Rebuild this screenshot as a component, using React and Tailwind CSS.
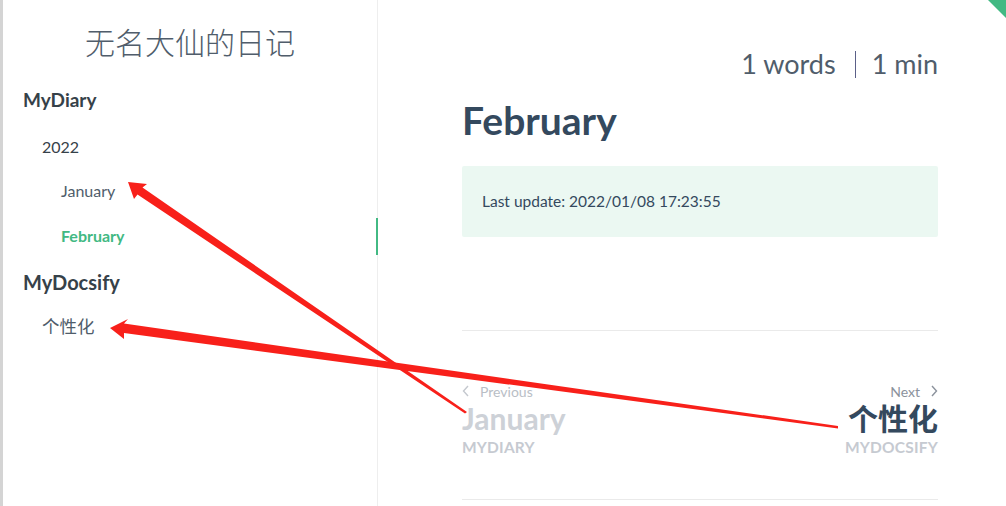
import React from "react";

const font = { fontFamily: 'Lato, "Noto Sans CJK SC", sans-serif' };

function Chevron({ dir = "left", className = "" }) {
  return (
    <svg width="8" height="12" viewBox="0 0 8 12" className={className} fill="none" stroke="currentColor" strokeWidth="1.4">
      {dir === "left" ? <path d="M6 1 L1.5 6 L6 11" /> : <path d="M2 1 L6.5 6 L2 11" />}
    </svg>
  );
}

export default function App() {
  return (
    <div className="relative w-[1006px] h-[506px] overflow-hidden bg-white flex" style={font}>
      {/* sidebar */}
      <aside className="w-[378px] h-full shrink-0 border-l-[3px] border-l-[#d4d4d4] border-r border-r-[#eeeeee] relative flex flex-col">
        <div className="mt-[20px] h-[44px] leading-[44px] text-center text-[30px] font-light text-[#505d6b]">无名大仙的日记</div>
        <div className="mt-[16px] h-[40px] flex items-center pl-[20px] text-[19px] font-bold text-[#364149]">MyDiary</div>
        <div className="mt-[7px] h-[40px] flex items-center pl-[39px] text-[16px] text-[#364149]">2022</div>
        <div className="mt-[4px] h-[40px] flex items-center pl-[58px] text-[16px] text-[#505d6b]">January</div>
        <div className="mt-[5px] h-[40px] flex items-center pl-[58px] text-[16px] font-bold text-[#42b983]">February</div>
        <div className="mt-[6px] h-[40px] flex items-center pl-[20px] text-[20px] font-bold text-[#364149]">MyDocsify</div>
        <div className="mt-[5px] h-[40px] flex items-center pl-[39px] text-[17.5px] text-[#505d6b]">个性化</div>
        <div className="absolute right-[-1px] top-[218px] w-[2px] h-[37px] bg-[#42b983]" />
      </aside>

      {/* main */}
      <main className="flex-1 h-full pl-[84px] pr-[68px] flex flex-col">
        <div className="mt-[44px] h-[40px] flex items-center justify-end text-[27px] text-[#505d6b]">
          <span>1 words</span>
          <span className="ml-[19px] mr-[16px] w-px h-[27px] bg-[#5b6088]" />
          <span>1 min</span>
        </div>
        <h1 className="mt-[12px] h-[48px] leading-[48px] text-[39px] font-bold text-[#34495e]">February</h1>
        <div className="mt-[22px] h-[71px] rounded-[2px] bg-[#ebf8f2] flex items-center pl-[20px] text-[15.5px] text-[#34495e]">
          Last update: 2022/01/08 17:23:55
        </div>
        <div className="mt-[93px] h-px bg-[#eaeaea]" />
        <div className="flex justify-between mt-[51px] h-[117px]">
          <div className="flex flex-col">
            <div className="flex items-center gap-[10px] h-[18px] text-[14px] text-[#b9bec6]">
              <Chevron dir="left" className="text-[#c4c8ce]" />
              <span>Previous</span>
            </div>
            <div className="h-[36px] leading-[36px] text-[30px] font-bold text-[#cdd1d7]">January</div>
            <div className="h-[22px] leading-[22px] text-[15.5px] font-bold tracking-[0.2px] text-[#c6cad1]">MYDIARY</div>
          </div>
          <div className="flex flex-col items-end">
            <div className="flex items-center gap-[10px] h-[18px] text-[14px] text-[#8b929c]">
              <span>Next</span>
              <Chevron dir="right" className="text-[#8b929c]" />
            </div>
            <div className="h-[36px] leading-[36px] text-[30px] font-bold text-[#34495e]">个性化</div>
            <div className="h-[22px] leading-[22px] text-[15.5px] font-bold tracking-[0.2px] text-[#c6cad1]">MYDOCSIFY</div>
          </div>
        </div>
        <div className="h-px bg-[#eaeaea]" />
      </main>

      {/* corner */}
      <svg className="absolute top-0 right-0" width="20" height="20" viewBox="0 0 20 20">
        <polygon points="2,0 20,0 20,18" fill="#42b983" />
      </svg>

      {/* annotation arrows */}
      <svg className="absolute inset-0 pointer-events-none" width="1006" height="506" viewBox="0 0 1006 506">
        <polygon fill="#f8201a" points="128,182 147,184 142.5,187.5 467,412 465,413.5 137.5,194.5 134,199" />
        <polygon fill="#f8201a" points="110,328 128,319 124,323.5 838,426 838,428.5 124,333 124,339" />
      </svg>
    </div>
  );
}
